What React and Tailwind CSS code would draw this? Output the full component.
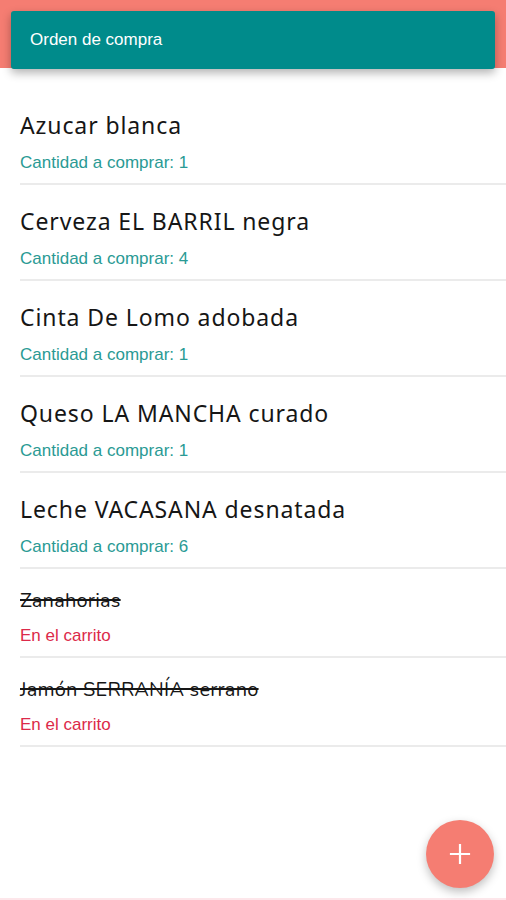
import React from "react";

const items = [
  { name: "Azucar blanca", qty: 1 },
  { name: "Cerveza EL BARRIL negra", qty: 4 },
  { name: "Cinta De Lomo adobada", qty: 1 },
  { name: "Queso LA MANCHA curado", qty: 1 },
  { name: "Leche VACASANA desnatada", qty: 6 },
];
const done = ["Zanahorias", "Jamón SERRANÍA serrano"];

const titleFont = { fontFamily: '"Noto Sans", "Open Sans", sans-serif' };
const doneFont = { fontFamily: '"Nunito", "Noto Sans", sans-serif' };
const arial = { fontFamily: '"Liberation Sans", Arial, sans-serif' };

export default function App() {
  return (
    <div className="relative w-[506px] h-[900px] bg-white overflow-hidden">
      <div className="h-[68px] bg-[#f57d72] px-[11px] pt-[11px]">
        <div className="h-[58px] bg-[#008b8b] rounded-[3px] flex items-center pl-[19px] shadow-[0_4px_10px_rgba(0,0,0,0.3)]">
          <span className="text-white text-[17px]" style={arial}>Orden de compra</span>
        </div>
      </div>
      <div className="mt-[21px] ml-[20px]">
        {items.map((it) => (
          <div key={it.name} className="pt-[22px] pb-[10px] border-b-2 border-[#ebebeb]">
            <div className="text-[23px] leading-[28px] tracking-[0.9px] text-[#161616]" style={titleFont}>{it.name}</div>
            <div className="mt-[14px] text-[17px] leading-[20px] text-[#2a9a94]" style={arial}>
              Cantidad a comprar: {it.qty}
            </div>
          </div>
        ))}
        {done.map((n) => (
          <div key={n} className="pt-[20px] pb-[10px] border-b-2 border-[#ebebeb]">
            <div className="text-[20px] leading-[24px] tracking-[0.2px] text-[#161616] line-through" style={doneFont}>{n}</div>
            <div className="mt-[13px] text-[17px] leading-[20px] text-[#dc2a4a]" style={arial}>En el carrito</div>
          </div>
        ))}
      </div>
      <div className="absolute left-0 right-0 bottom-0 h-[2px] bg-[#fde6ea]" />
      <button className="absolute left-[426px] top-[820px] w-[68px] h-[68px] rounded-full bg-[#f57d72] flex items-center justify-center shadow-[0_4px_10px_rgba(0,0,0,0.25)]">
        <svg width="22" height="22" viewBox="0 0 22 22" fill="none" stroke="white" strokeWidth="2.2" strokeLinecap="square">
          <path d="M11 2v18M2 11h18" />
        </svg>
      </button>
    </div>
  );
}
